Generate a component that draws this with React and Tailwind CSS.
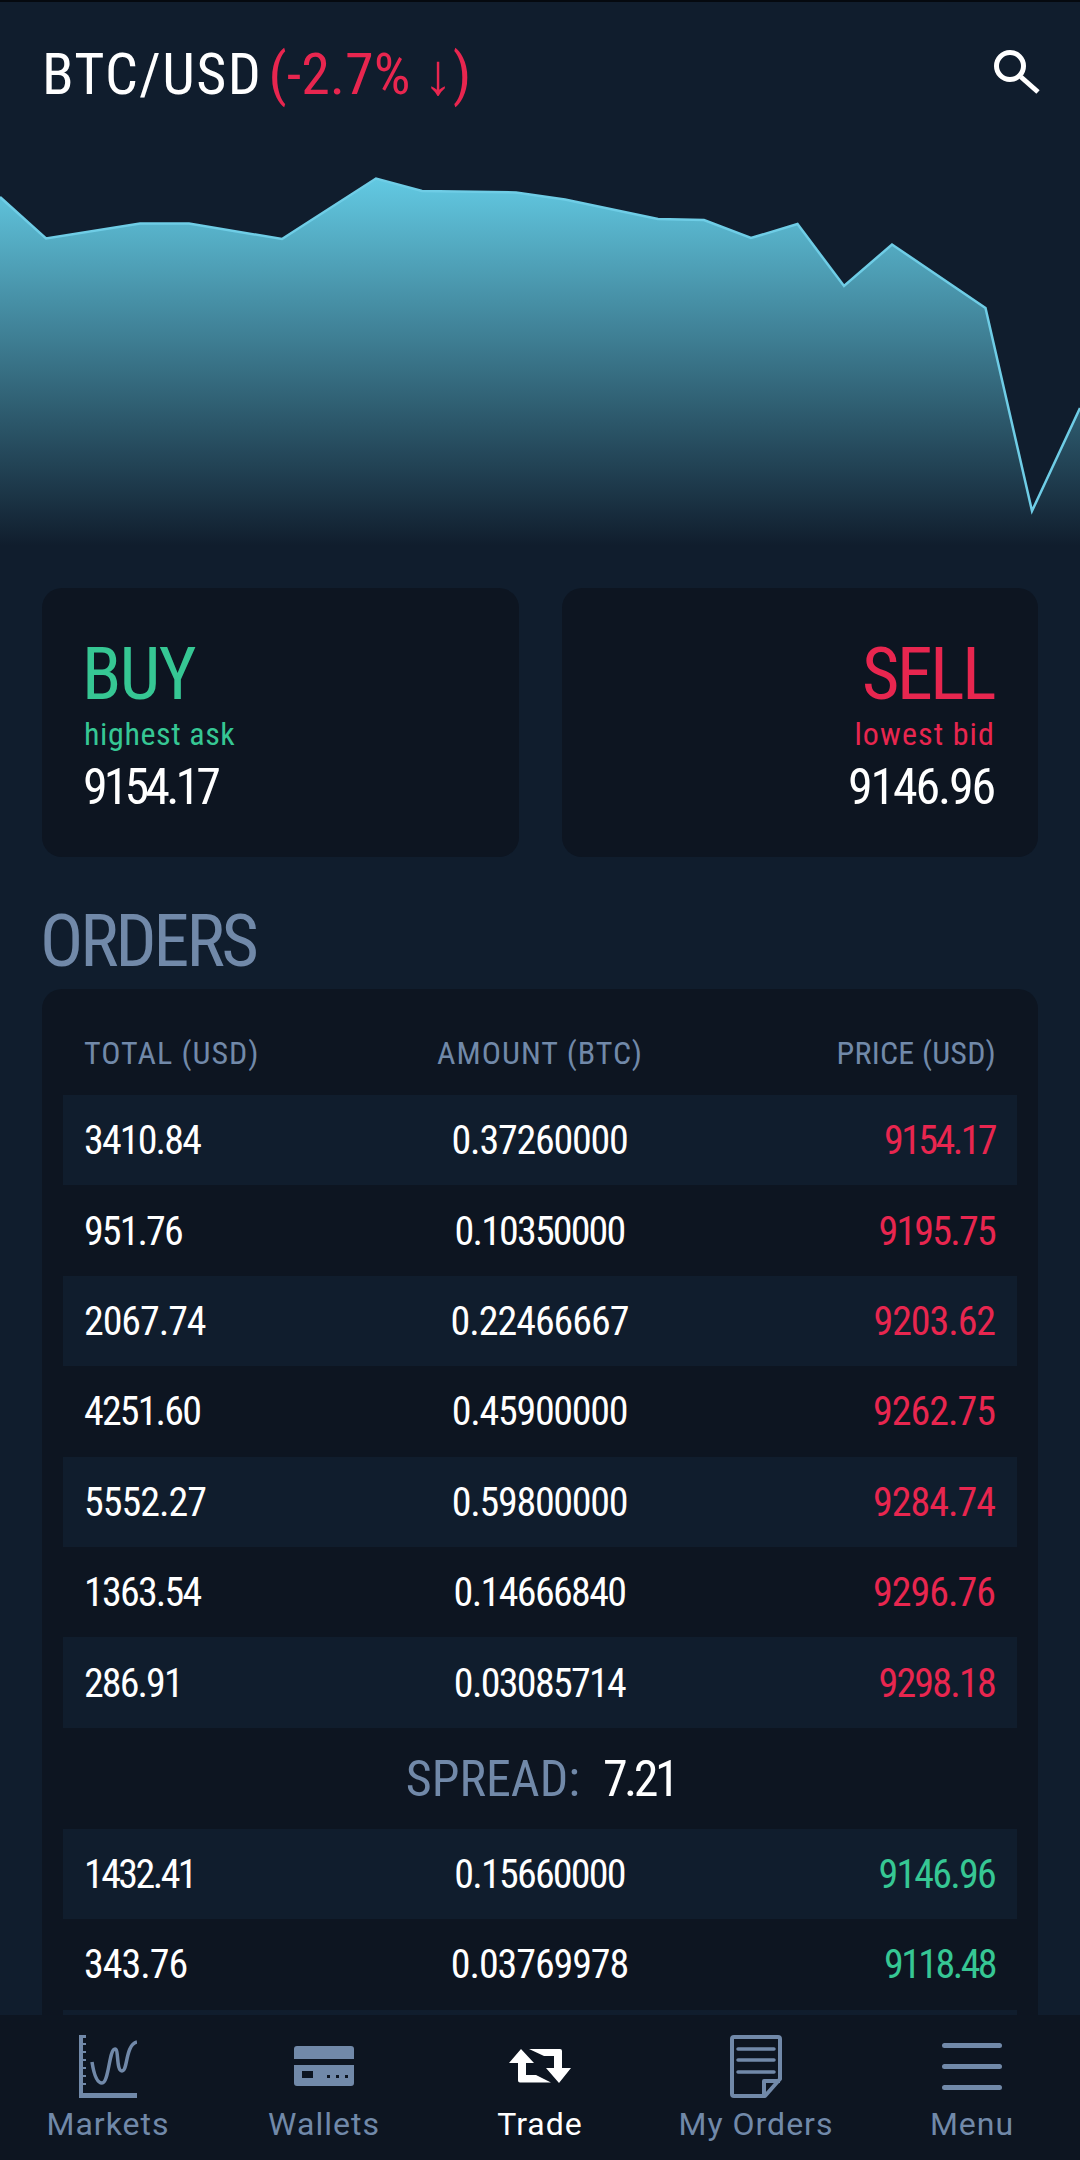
import React from 'react';

const sell = [
  ['3410.84', '0.37260000', '9154.17'],
  ['951.76', '0.10350000', '9195.75'],
  ['2067.74', '0.22466667', '9203.62'],
  ['4251.60', '0.45900000', '9262.75'],
  ['5552.27', '0.59800000', '9284.74'],
  ['1363.54', '0.14666840', '9296.76'],
  ['286.91', '0.03085714', '9298.18'],
];
const buy = [
  ['1432.41', '0.15660000', '9146.96'],
  ['343.76', '0.03769978', '9118.48'],
  ['', '', ''],
];

// the reference font has a narrow 1 and 0, so tighten numbers that hold more of them
function numSpacing(s) {
  if (!s) return undefined;
  const ones = s.split('1').length - 1;
  const zeros = s.split('0').length - 1;
  return { letterSpacing: `${-(s.length + 0.5 * zeros + 5.5 * ones) / s.length}px` };
}

function Row({ row, odd, color }) {
  return (
    <div className={`grid grid-cols-3 h-[90.4px] pt-[2px] items-center pl-[21px] pr-[22px] text-[40px] text-white ${odd ? 'bg-[#101d2d]' : ''}`}>
      <span style={numSpacing(row[0])}>{row[0]}</span>
      <span className="text-center" style={numSpacing(row[1])}>{row[1]}</span>
      <span className={`text-right ${color}`} style={numSpacing(row[2])}>{row[2]}</span>
    </div>
  );
}

function Chart() {
  const pts = '0,196 46,237.5 140,222.5 189,222.5 282,238 376,177.5 422,190 516,191.4 565,198.5 658,218 704,219 751,237 797.5,223 844,285 892,243.5 985.5,307 1032,510 1080,407';
  return (
    <svg className="absolute left-0 top-[-1px]" width="1080" height="560" viewBox="0 0 1080 560">
      <defs>
        <linearGradient id="area" x1="0" y1="178" x2="0" y2="545" gradientUnits="userSpaceOnUse">
          <stop offset="0" stopColor="#62c9e2" />
          <stop offset="1" stopColor="#101d2d" />
        </linearGradient>
      </defs>
      <polygon points={`${pts} 1080,560 0,560`} fill="url(#area)" />
      <polyline points={pts} fill="none" stroke="#6fcde6" strokeWidth="2.5" />
    </svg>
  );
}

function NavItem({ label, active, children }) {
  return (
    <div className={`flex flex-col items-center ${active ? 'text-white' : 'text-[#7189a9]'}`}>
      <div className="h-[70px] flex items-center justify-center">{children}</div>
      <span className="mt-[5px] text-[32px] leading-[36px] tracking-[1px]">{label}</span>
    </div>
  );
}

export default function App() {
  return (
    <div className="relative w-[1080px] h-[2160px] overflow-hidden bg-[#101d2d] font-['Roboto',sans-serif] font-stretch-[75%] border-t-2 border-[#05090f]">
      <Chart />
      <div className="relative h-[586px]">
        <div className="flex items-center justify-between pl-[42px] pr-[38px] pt-[38px]">
          <div className="text-[58px] leading-[68px] text-white">
            <span className="tracking-[1.4px]">BTC/USD</span> <span className="-ml-[7px] text-[#e8264f]">(-2.7% ↓)</span>
          </div>
          <svg className="-mt-[5px]" width="48" height="48" viewBox="0 0 48 48" fill="none" stroke="#fff" strokeWidth="5">
            <circle cx="16" cy="18" r="13.5" />
            <path d="M27 29 L44 44" />
          </svg>
        </div>
      </div>

      <div className="relative grid grid-cols-2 gap-[43px] px-[42px]">
        <div className="h-[269px] rounded-[20px] bg-[#0d1521] pl-[40px] pt-[47px]">
          <div className="text-[72px] leading-[80px] tracking-[-1.5px] text-[#36c794]">BUY</div>
          <div className="ml-[2px] text-[32px] leading-[38px] tracking-[0.6px] text-[#36c794]">highest ask</div>
          <div className="ml-[1px] mt-[5px] text-[50px] leading-[58px] tracking-[-3.9px] text-white">9154.17</div>
        </div>
        <div className="h-[269px] rounded-[20px] bg-[#0d1521] pr-[43px] pt-[47px] text-right">
          <div className="mr-[1px] text-[72px] leading-[80px] tracking-[-2.4px] text-[#e8264f]">SELL</div>
          <div className="text-[32px] leading-[38px] tracking-[1.1px] text-[#e8264f]">lowest bid</div>
          <div className="mr-[1px] mt-[5px] text-[50px] leading-[58px] tracking-[-2.2px] text-white">9146.96</div>
        </div>
      </div>

      <div className="relative pl-[40px] mt-[39px] mb-[1px] text-[72px] leading-[92px] tracking-[-3px] text-[#7189a9]">ORDERS</div>

      <div className="relative mx-[42px] rounded-t-[20px] bg-[#0d1521] px-[21px]">
        <div className="grid grid-cols-3 h-[106px] pt-[22px] items-center px-[21px] text-[32px] text-[#7189a9]">
          <span className="tracking-[1px]">TOTAL (USD)</span>
          <span className="text-center tracking-[1px]">AMOUNT (BTC)</span>
          <span className="text-right tracking-[0.2px]">PRICE (USD)</span>
        </div>
        {sell.map((r, i) => <Row key={i} row={r} odd={i % 2 === 0} color="text-[#e8264f]" />)}
        <div className="h-[101px] pt-[2px] flex items-center justify-center gap-[23px] text-[50px]">
          <span className="ml-[2px] text-[#7189a9]">SPREAD:</span>
          <span className="text-white tracking-[-3.5px]">7.21</span>
        </div>
        {buy.map((r, i) => <Row key={i} row={r} odd={i % 2 === 0} color="text-[#36c794]" />)}
      </div>

      <div className="absolute left-0 right-0 bottom-0 h-[145px] bg-[#0d1521] grid grid-cols-5 pt-[16px] font-stretch-normal">
        <NavItem label="Markets">
          <svg width="58" height="63" viewBox="0 0 58 63" fill="none" stroke="currentColor">
            <path d="M0 0H7V3H4V8H7V10H4V16H7V18H4V24H7V26H4V32H7V34H4V40H7V42H4V48H7V50H4V58H58V63H0Z" fill="currentColor" stroke="none" />
            <path d="M13 27C15 40 18 48 23 48C30 48 30 14 36 14C40 14 37 36 43 36C49 36 46 10 58 7" strokeWidth="3.5" />
          </svg>
        </NavItem>
        <NavItem label="Wallets">
          <svg width="60" height="40" viewBox="0 0 60 40" fill="currentColor">
            <path d="M3 0H57A3 3 0 0 1 60 3V13H0V3A3 3 0 0 1 3 0Z" />
            <path fillRule="evenodd" d="M0 19H60V37A3 3 0 0 1 57 40H3A3 3 0 0 1 0 37ZM8 25V32H19V25ZM33 29V32H36V29ZM42 29V32H45V29ZM51 29V32H54V29Z" />
          </svg>
        </NavItem>
        <NavItem label="Trade" active>
          <svg width="62" height="34" viewBox="0 0 62 34" fill="currentColor">
            <path d="M12 0L25 14H17V26H27L42 33.5H11A2 2 0 0 1 9 31.5V14H0Z" />
            <path d="M50 34L37 19H45V7H35L20 0H51A2 2 0 0 1 53 2V19H62Z" />
          </svg>
        </NavItem>
        <NavItem label="My Orders">
          <svg width="52" height="63" viewBox="0 0 52 63" fill="none" stroke="currentColor" strokeWidth="4">
            <path d="M4 2H48A2 2 0 0 1 50 4V44L35 61H4A2 2 0 0 1 2 59V4A2 2 0 0 1 4 2Z" strokeLinejoin="round" />
            <path d="M34 61V46H50" strokeLinejoin="round" />
            <path d="M8 14H44M8 25H44M8 37H44" strokeWidth="3.5" strokeLinecap="round" />
          </svg>
        </NavItem>
        <NavItem label="Menu">
          <svg width="60" height="47" viewBox="0 0 60 47" fill="currentColor">
            <rect x="0" y="0" width="60" height="5" rx="2.5" />
            <rect x="0" y="21" width="60" height="5" rx="2.5" />
            <rect x="0" y="42" width="60" height="5" rx="2.5" />
          </svg>
        </NavItem>
      </div>
    </div>
  );
}
